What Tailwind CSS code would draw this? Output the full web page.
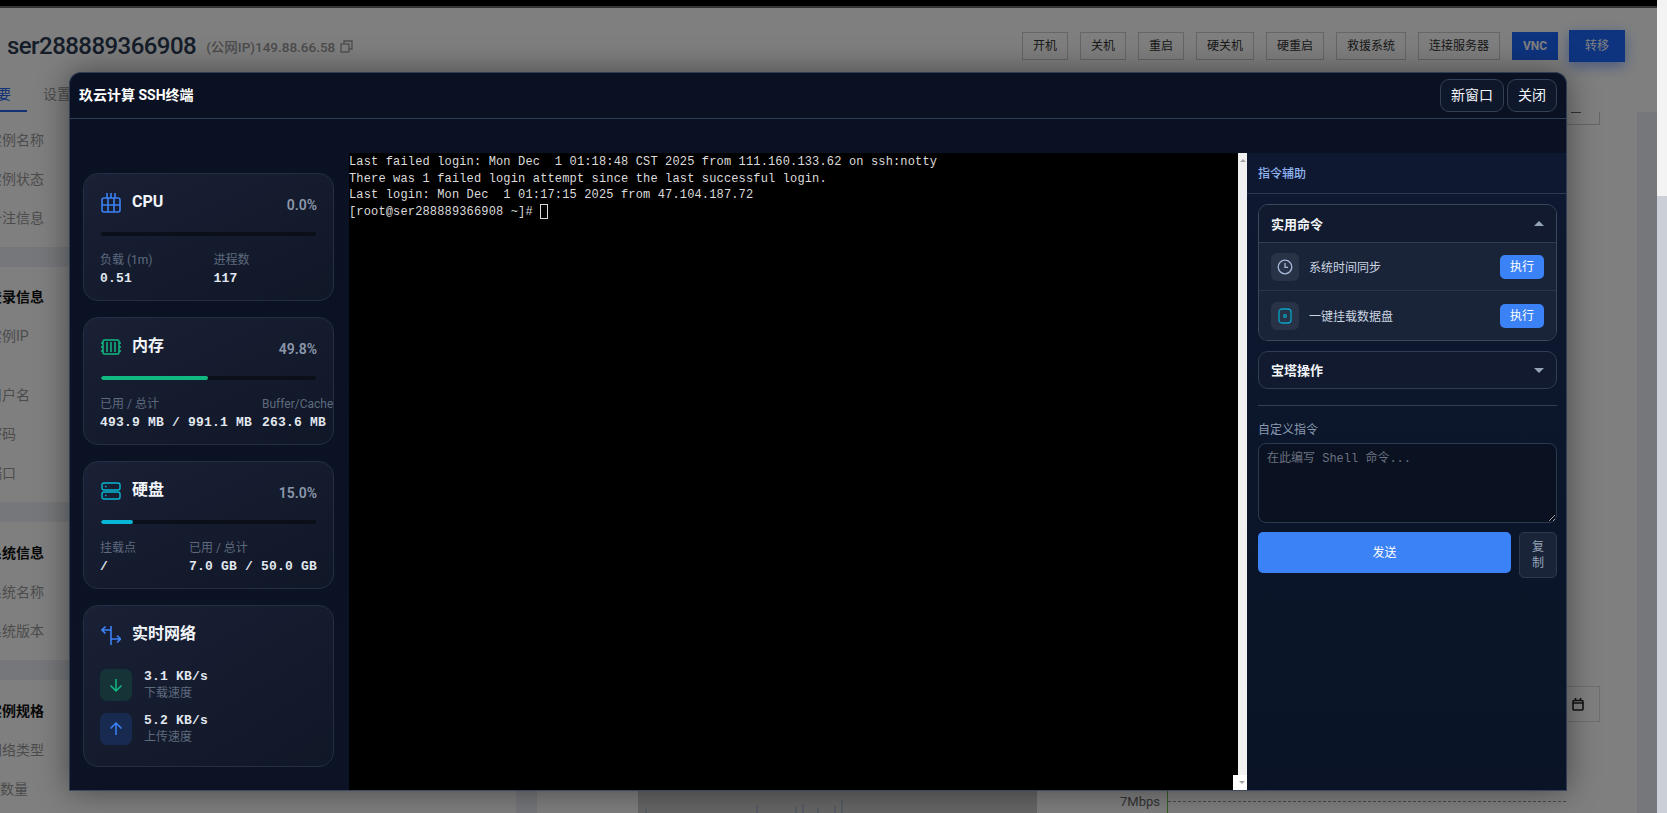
<!DOCTYPE html>
<html lang="zh-CN">
<head>
    <meta charset="UTF-8">
    <meta name="viewport" content="width=device-width, initial-scale=1.0">
    <title>玖云计算 SSH终端</title>
    <script src="https://cdn.jsdelivr.net/npm/@tailwindcss/browser@4"></script>
</head>
<body class="bg-white font-['Roboto','Noto_Sans_CJK_SC',sans-serif]">
<div class="flex w-[1667px] h-[813px] overflow-hidden">
    <!-- Page behind the dialog -->
    <div class="relative w-[1657px] h-[813px] overflow-hidden bg-white flex flex-col">
        <div class="h-[6px] bg-black"></div>
        <div class="h-[2px] bg-[#666]"></div>

        <!-- Title row -->
        <div class="h-[76px] flex items-center pl-[7px] pr-[32px]">
            <span class="text-[24px] font-medium text-[#2a3a52] tracking-[-0.55px]">ser288889366908</span>
            <span class="ml-[10px] mt-[2px] text-[13.500px] font-medium text-[#999]">(公网IP)149.88.66.58</span>
            <svg class="ml-[5px] w-[13px] h-[13px] text-[#999]" viewBox="0 0 13 13" fill="none" stroke="currentColor" stroke-width="1.3"><rect x="1" y="4" width="8" height="8"/><path d="M4 4V1h8v8H9"/></svg>
            <div class="ml-auto flex items-center gap-[12px] text-[12px] text-[#333]">
                <button class="h-[28px] w-[46px] border border-[#ccc]">开机</button>
                <button class="h-[28px] w-[46px] border border-[#ccc]">关机</button>
                <button class="h-[28px] w-[46px] border border-[#ccc]">重启</button>
                <button class="h-[28px] w-[58px] border border-[#ccc]">硬关机</button>
                <button class="h-[28px] w-[58px] border border-[#ccc]">硬重启</button>
                <button class="h-[28px] w-[70px] border border-[#ccc]">救援系统</button>
                <button class="h-[28px] w-[82px] border border-[#ccc]">连接服务器</button>
                <button class="h-[28px] w-[46px] bg-[#1c68ff] text-white font-bold">VNC</button>
                <button class="h-[32px] w-[56px] -ml-px bg-[#1c68ff] text-white shadow-[0_4px_14px_rgba(28,104,255,0.5)]">转移</button>
            </div>
        </div>

        <!-- Tabs -->
        <div class="h-[28px] flex text-[14px] text-[#999]">
            <span class="-ml-[17px] w-[44px] h-[28px] border-b-[2px] border-[#2563eb] text-[#2563eb]">概要</span>
            <span class="ml-[16px]">设置</span>
        </div>

        <div class="flex flex-1 min-h-0">
            <!-- Detail list -->
            <div class="w-[516px] pt-[9px] text-[14px] text-[#999] shrink-0">
                <div class="h-[39px] flex items-center -ml-[12px]">实例名称</div>
                <div class="h-[39px] flex items-center -ml-[12px]">实例状态</div>
                <div class="h-[39px] flex items-center -ml-[12px]">备注信息</div>
                <div class="h-[20px] mt-[9px] bg-[#eceef4]"></div>
                <div class="h-[39px] mt-[11px] flex items-center -ml-[12px] font-bold text-[#111]">登录信息</div>
                <div class="h-[39px] flex items-center -ml-[12px]">实例IP</div>
                <div class="h-[39px] mt-[20px] flex items-center -ml-[12px]">用户名</div>
                <div class="h-[39px] flex items-center -ml-[12px]">密码</div>
                <div class="h-[39px] flex items-center -ml-[12px]">端口</div>
                <div class="h-[20px] mt-[9px] bg-[#eceef4]"></div>
                <div class="h-[39px] mt-[12px] flex items-center -ml-[12px] font-bold text-[#111]">系统信息</div>
                <div class="h-[39px] flex items-center -ml-[12px]">系统名称</div>
                <div class="h-[39px] flex items-center -ml-[12px]">系统版本</div>
                <div class="h-[20px] mt-[9px] bg-[#eceef4]"></div>
                <div class="h-[39px] mt-[12px] flex items-center -ml-[12px] font-bold text-[#111]">实例规格</div>
                <div class="h-[39px] flex items-center -ml-[12px]">网络类型</div>
                <div class="h-[39px] flex items-center">数量</div>
            </div>
            <div class="w-[21px] shrink-0 bg-[#eceef4]"></div>

            <!-- Right of the list -->
            <div class="flex-1 flex flex-col">
                <div class="ml-auto mr-[37px] w-[130px] h-[13px] border-x border-b border-[#ccc] flex justify-end pr-[18px]"><span class="w-[10px] h-px bg-[#666]"></span></div>
                <div class="ml-auto mr-[37px] mt-[561px] w-[130px] h-[36px] border border-[#ddd] flex items-center justify-end pr-[15px]">
                    <svg class="w-[12px] h-[13px]" viewBox="0 0 12 13" fill="none" stroke="#222" stroke-width="1.6"><rect x="1" y="2.5" width="10" height="9.5" rx="1"/><path d="M1 5h10M3.5 0v3M8.500 0v3"/></svg>
                </div>
                <div class="mt-[69px] h-[22px] flex">
                    <div class="ml-[101px] w-[399px] h-[22px] bg-[#ccc]">
                        <svg class="w-[399px] h-[22px]" viewBox="0 0 399 22" fill="none" stroke="#8ea2c8" stroke-width="1">
                            <path d="M8 22v-4M119 22v-8M158 22v-6M165 22v-9M180 22v-5M197 22v-7M204 22v-13"/>
                        </svg>
                    </div>
                    <span class="ml-[83px] text-[13px] leading-[22px] text-[#666]">7Mbps</span>
                    <div class="ml-[7px] w-px h-[22px] bg-[#6abf40]"></div>
                    <div class="mt-[10px] w-[398px] h-0 border-t border-dashed border-[#999]"></div>
                </div>
            </div>
            <div class="w-[20px] shrink-0 bg-[#eceef4]"></div>
        </div>

        <!-- Mask -->
        <div class="absolute inset-0 bg-black/50"></div>

        <!-- SSH dialog -->
        <div class="absolute left-[69px] top-[72px] w-[1498px] h-[719px] flex flex-col overflow-hidden rounded-t-[12px] border border-[#2f3d55] border-b-[#3a475c] bg-[#0a1122] shadow-[0_0_32px_rgba(0,0,0,0.45)]">
            <div class="h-[46px] shrink-0 flex items-center justify-between pl-[9px] pr-[9px] border-b border-[#2f3d55]">
                <span class="text-[14px] font-bold text-white">玖云计算 SSH终端</span>
                <div class="flex gap-[3px] text-[14px] text-[#f1f5f9]">
                    <button class="h-[33px] w-[64px] rounded-[9px] border border-[#334155] bg-[#0f172a]">新窗口</button>
                    <button class="h-[33px] w-[50px] rounded-[9px] border border-[#334155] bg-[#0f172a]">关闭</button>
                </div>
            </div>

            <div class="flex flex-1 min-h-0">
                <!-- Server stats -->
                <div class="w-[279px] shrink-0 pt-[54px] pl-[13px] pr-[15px] flex flex-col gap-[16px] bg-gradient-to-b from-[#0a1122] to-[#0b1324]">
                    <div class="h-[128px] rounded-[15px] border border-[#252e42] bg-gradient-to-br from-[#1a2035] to-[#101727] px-[16px] pt-[17px]">
                        <div class="flex items-center h-[20px] pl-px">
                            <svg class="w-[20px] h-[20px] mt-[4px] text-[#3b82f6]" viewBox="0 0 20 20" fill="none" stroke="currentColor" stroke-width="1.600"><rect x="1" y="5" width="18" height="14" rx="2"/><path d="M1 12h18M7 5v14M13 5v14M6 0v5M10 0v5M14 0v5"/></svg>
                            <span class="ml-[11px] pt-[2px] text-[16px] font-bold text-[#f1f5f9]">CPU</span>
                            <span class="ml-auto mt-[8px] text-[14px] font-semibold text-[#8a97ab]">0.0%</span>
                        </div>
                        <div class="mt-[21px] mx-px h-[4px] rounded-full bg-[#0b0f1a]"></div>
                        <div class="mt-[15px] grid grid-cols-[1fr_1fr] gap-x-[10px] text-[12px] text-[#5d6a7e]">
                            <span>负载 (1m)</span><span>进程数</span>
                            <span class="font-['Liberation_Mono','Noto_Sans_CJK_SC',monospace] text-[13px] font-bold text-[#e2e8f0] tracking-[0.2px]">0.51</span>
                            <span class="font-['Liberation_Mono','Noto_Sans_CJK_SC',monospace] text-[13px] font-bold text-[#e2e8f0] tracking-[0.2px]">117</span>
                        </div>
                    </div>

                    <div class="h-[128px] rounded-[15px] border border-[#252e42] bg-gradient-to-br from-[#1a2035] to-[#101727] px-[16px] pt-[17px]">
                        <div class="flex items-center h-[20px] pl-px">
                            <svg class="w-[20px] h-[16px] mt-[4px] text-[#10b981]" viewBox="0 0 20 16" fill="none" stroke="currentColor" stroke-width="1.500"><rect x="2" y="1" width="16" height="14" rx="1.500"/><path d="M6 3v10M10 3v10M14 3v10M0 4h2M0 8h2M0 12h2M18 4h2M18 8h2M18 12h2"/></svg>
                            <span class="ml-[11px] pt-[2px] text-[16px] font-bold text-[#f1f5f9]">内存</span>
                            <span class="ml-auto mt-[8px] text-[14px] font-semibold text-[#8a97ab]">49.8%</span>
                        </div>
                        <div class="mt-[21px] mx-px h-[4px] rounded-full bg-[#0b0f1a] overflow-hidden"><div class="h-full rounded-full bg-[#10b981]" style="width: 49.8%"></div></div>
                        <div class="mt-[15px] grid grid-cols-[1fr_1fr] gap-x-[10px] text-[12px] text-[#5d6a7e]">
                            <span>已用 / 总计</span><span>Buffer/Cache</span>
                            <span class="font-['Liberation_Mono','Noto_Sans_CJK_SC',monospace] text-[13px] font-bold text-[#e2e8f0] tracking-[0.2px] whitespace-nowrap">493.9 MB / 991.1 MB</span>
                            <span class="font-['Liberation_Mono','Noto_Sans_CJK_SC',monospace] text-[13px] font-bold text-[#e2e8f0] tracking-[0.2px] whitespace-nowrap">263.6 MB</span>
                        </div>
                    </div>

                    <div class="h-[128px] rounded-[15px] border border-[#252e42] bg-gradient-to-br from-[#1a2035] to-[#101727] px-[16px] pt-[17px]">
                        <div class="flex items-center h-[20px] pl-px">
                            <svg class="w-[20px] h-[18px] mt-[4px] text-[#06b6d4]" viewBox="0 0 20 18" fill="none" stroke="currentColor" stroke-width="1.400"><rect x="1" y="1" width="18" height="7" rx="2"/><rect x="1" y="10" width="18" height="7" rx="2"/><path d="M4 4.500h1.500M4 13.500h1.500"/></svg>
                            <span class="ml-[11px] pt-[2px] text-[16px] font-bold text-[#f1f5f9]">硬盘</span>
                            <span class="ml-auto mt-[8px] text-[14px] font-semibold text-[#8a97ab]">15.0%</span>
                        </div>
                        <div class="mt-[21px] mx-px h-[4px] rounded-full bg-[#0b0f1a] overflow-hidden"><div class="h-full rounded-full bg-[#06b6d4]" style="width: 15%"></div></div>
                        <div class="mt-[15px] grid grid-cols-[1fr_1fr] gap-x-[10px] text-[12px] text-[#5d6a7e]">
                            <span>挂载点</span><span>已用 / 总计</span>
                            <span class="font-['Liberation_Mono','Noto_Sans_CJK_SC',monospace] text-[13px] font-bold text-[#e2e8f0] tracking-[0.2px]">/</span>
                            <span class="font-['Liberation_Mono','Noto_Sans_CJK_SC',monospace] text-[13px] font-bold text-[#e2e8f0] tracking-[0.2px] whitespace-nowrap">7.0 GB / 50.0 GB</span>
                        </div>
                    </div>

                    <div class="h-[162px] rounded-[15px] border border-[#252e42] bg-gradient-to-br from-[#1a2035] to-[#101727] px-[16px] pt-[17px]">
                        <div class="flex items-center h-[20px] pl-px">
                            <svg class="w-[20px] h-[20px] mt-[4px] text-[#3b82f6]" viewBox="0 0 20 20" fill="none" stroke="currentColor" stroke-width="1.600"><path d="M10 1v19M10 5H1M4.500 1.500 1 5l3.500 3.500M10 14h9.500M16 10.500l3.500 3.500-3.500 3.500"/></svg>
                            <span class="ml-[11px] pt-[2px] text-[16px] font-bold text-[#f1f5f9]">实时网络</span>
                        </div>
                        <div class="mt-[26px] flex items-center h-[32px]">
                            <div class="w-[32px] h-[32px] rounded-[7px] bg-[#163438] flex items-center justify-center">
                                <svg class="w-[14px] h-[14px] text-[#10b981]" viewBox="0 0 14 14" fill="none" stroke="currentColor" stroke-width="1.500"><path d="M7 1v12M1.500 7.500 7 13l5.500-5.500"/></svg>
                            </div>
                            <div class="ml-[12px] flex flex-col">
                                <span class="font-['Liberation_Mono',monospace] text-[13px] leading-[16px] font-bold text-[#e2e8f0] tracking-[0.2px]">3.1 KB/s</span>
                                <span class="text-[12px] leading-[16px] text-[#5d6a7e]">下载速度</span>
                            </div>
                        </div>
                        <div class="mt-[12px] flex items-center h-[32px]">
                            <div class="w-[32px] h-[32px] rounded-[7px] bg-[#192a50] flex items-center justify-center">
                                <svg class="w-[14px] h-[14px] text-[#3b82f6]" viewBox="0 0 14 14" fill="none" stroke="currentColor" stroke-width="1.500"><path d="M7 13V1M1.500 6.500 7 1l5.500 5.500"/></svg>
                            </div>
                            <div class="ml-[12px] flex flex-col">
                                <span class="font-['Liberation_Mono',monospace] text-[13px] leading-[16px] font-bold text-[#e2e8f0] tracking-[0.2px]">5.2 KB/s</span>
                                <span class="text-[12px] leading-[16px] text-[#5d6a7e]">上传速度</span>
                            </div>
                        </div>
                    </div>
                </div>

                <div class="flex flex-1 min-w-0 pt-[34px]">
                    <!-- Terminal -->
                    <div class="relative w-[898px] shrink-0 flex bg-black">
                        <div class="flex-1 pt-px font-['Liberation_Mono',monospace] text-[12px] leading-[16.5px] tracking-[0.15px] text-[#dcdcdc]">
                            <div class="whitespace-pre">Last failed login: Mon Dec  1 01:18:48 CST 2025 from 111.160.133.62 on ssh:notty</div>
                            <div class="whitespace-pre">There was 1 failed login attempt since the last successful login.</div>
                            <div class="whitespace-pre">Last login: Mon Dec  1 01:17:15 2025 from 47.104.187.72</div>
                            <div class="flex whitespace-pre"><span>[root@ser288889366908 ~]# </span><span class="w-[8px] h-[15px] border border-[#dcdcdc]"></span></div>
                        </div>
                        <div class="w-[9px] shrink-0 bg-[#f1f1f1] flex justify-center pt-[6px]">
                            <span class="w-0 h-0 border-x-[3px] border-x-transparent border-b-[3px] border-b-[#a3a3a3]"></span>
                        </div>
                        <div class="absolute right-0 bottom-0 w-[14px] h-[15px] bg-white flex items-center justify-center pl-[4px]">
                            <span class="w-0 h-0 border-x-[3px] border-x-transparent border-t-[3px] border-t-[#a3a3a3]"></span>
                        </div>
                    </div>

                    <!-- Command helper -->
                    <div class="flex-1 flex flex-col bg-gradient-to-b from-[#0e1830] to-[#0a1426]">
                        <div class="h-[41px] shrink-0 pl-[11px] pt-[2px] flex items-center border-b border-[#2a3850] text-[12px] font-medium text-[#8fb4f0]">指令辅助</div>
                        <div class="pl-[11px] pr-[9px] pt-[10px] flex flex-col">
                            <div class="rounded-[10px] border border-[#3a475c] overflow-hidden">
                                <div class="h-[38px] flex items-center justify-between pl-[12px] pr-[12px] bg-[#111a2e] border-b border-[#2f3d55]">
                                    <span class="pt-[2px] text-[13px] font-bold text-[#f1f5f9]">实用命令</span>
                                    <span class="w-0 h-0 border-x-[5px] border-x-transparent border-b-[5px] border-b-[#94a3b8]"></span>
                                </div>
                                <div class="h-[48px] flex items-center pl-[12px] pr-[12px] bg-[#1a2438] border-b border-[#2a3448]">
                                    <div class="w-[28px] h-[28px] rounded-[6px] bg-[#293347] flex items-center justify-center">
                                        <svg class="w-[16px] h-[16px] text-[#a8b8d8]" viewBox="0 0 16 16" fill="none" stroke="currentColor" stroke-width="1.300"><circle cx="8" cy="8" r="6.800"/><path d="M8 4v4.300h3"/></svg>
                                    </div>
                                    <span class="ml-[10px] pt-[2px] text-[12px] text-[#cbd5e1]">系统时间同步</span>
                                    <button class="ml-auto w-[44px] h-[24px] rounded-[5px] bg-[#3b82f6] text-[12px] text-white">执行</button>
                                </div>
                                <div class="h-[49px] flex items-center pl-[12px] pr-[12px] bg-[#1a2438]">
                                    <div class="w-[28px] h-[28px] rounded-[6px] bg-[#293347] flex items-center justify-center">
                                        <svg class="w-[14px] h-[16px] text-[#06a5c4]" viewBox="0 0 14 16" fill="none" stroke="currentColor" stroke-width="1.300"><rect x="1" y="1" width="12" height="14" rx="3"/><circle cx="7" cy="8" r="1.300"/></svg>
                                    </div>
                                    <span class="ml-[10px] pt-[2px] text-[12px] text-[#cbd5e1]">一键挂载数据盘</span>
                                    <button class="ml-auto w-[44px] h-[24px] rounded-[5px] bg-[#3b82f6] text-[12px] text-white">执行</button>
                                </div>
                            </div>

                            <div class="mt-[10px] h-[38px] rounded-[10px] border border-[#2f3d55] bg-[#111a2e] flex items-center justify-between px-[12px]">
                                <span class="pt-[2px] text-[13px] font-bold text-[#f1f5f9]">宝塔操作</span>
                                <span class="w-0 h-0 border-x-[5px] border-x-transparent border-t-[5px] border-t-[#94a3b8]"></span>
                            </div>

                            <div class="mt-[16px] border-t border-[#2f3d55]"></div>
                            <label class="mt-[16px] text-[12px] leading-[16px] text-[#8a9ab0]">自定义指令</label>
                            <textarea class="mt-[5px] h-[80px] resize-y rounded-[8px] border border-[#2c3a50] bg-[#0a1120] px-[8px] py-[7px] font-['Liberation_Mono','Noto_Sans_CJK_SC',monospace] text-[12px] leading-[16px] text-[#ccc] placeholder:text-[#6b7280] outline-none" placeholder="在此编写 Shell 命令..."></textarea>
                            <div class="mt-[9px] flex items-start gap-[8px]">
                                <button class="w-[253px] h-[41px] rounded-[5px] bg-[#3b82f6] text-[12px] text-white">发送</button>
                                <button class="w-[38px] h-[46px] px-[12px] rounded-[5px] border border-[#2c3a50] bg-[#1a2438] text-[12px] leading-[16px] text-[#94a3b8]">复制</button>
                            </div>
                        </div>
                    </div>
                </div>
            </div>
        </div>
    </div>

    <!-- Strip right of the page -->
    <div class="w-[10px] shrink-0 flex flex-col">
        <div class="h-[196px] bg-[#f3f3f3]"></div>
        <div class="flex-1 bg-[#cbd0d8]"></div>
    </div>
</div>
</body>
</html>
